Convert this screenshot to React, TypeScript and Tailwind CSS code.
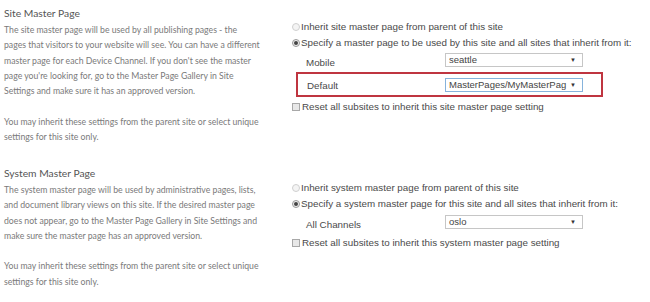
import React from "react";

const descFont = { fontFamily: "Lato, 'Open Sans', sans-serif" };
const formFont = { fontFamily: "'Liberation Sans', Arial, sans-serif" };

function Radio({ checked }: { checked?: boolean }) {
  return (
    <span
      className={`w-[8px] h-[8px] rounded-full border flex items-center justify-center shrink-0 mr-[1px] ${
        checked ? "border-[#9a9a9a] bg-[#f0f0f0]" : "border-[#d0d0d0] bg-[#f4f4f4]"
      }`}
    >
      {checked && <span className="w-[4px] h-[4px] rounded-full bg-[#444]" />}
    </span>
  );
}

function Checkbox() {
  return (
    <span className="w-[8px] h-[8px] border border-[#a8a8a8] bg-[#e8e8e8] shrink-0 mr-[2px]" />
  );
}

function Select({ value, focused }: { value: string; focused?: boolean }) {
  return (
    <div
      className={`w-[138px] h-[14px] border bg-white flex items-center pl-[3px] pr-[6px] gap-[2px] ${
        focused ? "border-[#86b3dc]" : "border-[#c6c6c6]"
      }`}
    >
      <span className="flex-1 text-[9.5px] text-[#444] leading-none whitespace-nowrap">
        {value}
      </span>
      <span className="text-[6px] text-[#333] leading-none">▼</span>
    </div>
  );
}

function Section({
  title,
  lines,
  children,
}: {
  title: string;
  lines: string[];
  children: React.ReactNode;
}) {
  return (
    <div className="flex h-[160px]">
      <div className="w-[292px] shrink-0 pl-[4px] pt-[4px]" style={descFont}>
        <div className="h-[18px] leading-[18px] text-[10.3px] text-[#555]">{title}</div>
        <div className="text-[8.7px] leading-[15.3px] text-[#7a7a7a] whitespace-nowrap">
          {lines.map((l, i) => (
            <div key={i} className="h-[15.3px]">
              {l}
            </div>
          ))}
        </div>
      </div>
      <div className="flex-1 text-[9.8px] text-[#4a4a4a]" style={formFont}>
        {children}
      </div>
    </div>
  );
}

export default function App() {
  return (
    <div className="w-[650px] h-[302px] bg-white overflow-hidden">
      <Section
        title="Site Master Page"
        lines={[
          "The site master page will be used by all publishing pages - the",
          "pages that visitors to your website will see. You can have a different",
          "master page for each Device Channel. If you don't see the master",
          "page you're looking for, go to the Master Page Gallery in Site",
          "Settings and make sure it has an approved version.",
          "",
          "You may inherit these settings from the parent site or select unique",
          "settings for this site only.",
        ]}
      >
        <div className="pt-[19px]">
          <div className="h-[16px] flex items-center">
            <Radio />
            <span>Inherit site master page from parent of this site</span>
          </div>
          <div className="h-[16px] flex items-center">
            <Radio checked />
            <span>Specify a master page to be used by this site and all sites that inherit from it:</span>
          </div>
          <div className="h-[21px] flex items-start pt-[2px]">
            <span className="w-[153px] pl-[14px] pt-[3px] leading-[14px]">Mobile</span>
            <Select value="seattle" />
          </div>
          <div className="ml-[4px] w-[307px] h-[25px] border-2 border-[#bf3540] flex items-center pl-[9px]">
            <span className="w-[138px] pt-[3px]">Default</span>
            <Select value="MasterPages/MyMasterPag" focused />
          </div>
          <div className="h-[16px] mt-[2px] flex items-center">
            <Checkbox />
            <span>Reset all subsites to inherit this site master page setting</span>
          </div>
        </div>
      </Section>
      <Section
        title="System Master Page"
        lines={[
          "The system master page will be used by administrative pages, lists,",
          "and document library views on this site. If the desired master page",
          "does not appear, go to the Master Page Gallery in Site Settings and",
          "make sure the master page has an approved version.",
          "",
          "You may inherit these settings from the parent site or select unique",
          "settings for this site only.",
        ]}
      >
        <div className="pt-[20px]">
          <div className="h-[16px] flex items-center">
            <Radio />
            <span>Inherit system master page from parent of this site</span>
          </div>
          <div className="h-[16px] flex items-center">
            <Radio checked />
            <span>Specify a system master page for this site and all sites that inherit from it:</span>
          </div>
          <div className="h-[21px] flex items-start pt-[3px]">
            <span className="w-[153px] pl-[14px] pt-[3px] leading-[14px]">All Channels</span>
            <Select value="oslo" />
          </div>
          <div className="h-[16px] mt-[2px] flex items-center">
            <Checkbox />
            <span>Reset all subsites to inherit this system master page setting</span>
          </div>
        </div>
      </Section>
    </div>
  );
}
